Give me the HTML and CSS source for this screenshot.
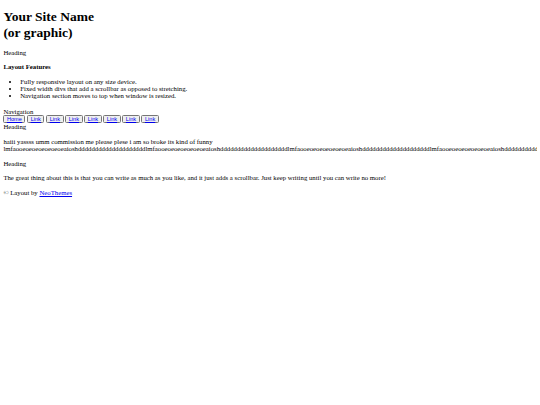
FILE: index.html
```html
<!DOCTYPE html>
<html>
<head>
<meta charset="utf-8">
<title>Your Site Name</title>
<link rel="stylesheet" href="styles.css">
</head>
<body>
<div class="page">
  <header class="site-header">
    <h1 class="site-title">Your Site Name<br>(or graphic)</h1>
  </header>
  <aside class="sidebar">
    <p class="block side-heading">Heading</p>
    <p class="block side-sub"><strong>Layout Features</strong></p>
    <ul class="features">
      <li>Fully responsive layout on any size device.</li>
      <li>Fixed width divs that add a scrollbar as opposed to stretching.</li>
      <li>Navigation section moves to top when window is resized.</li>
    </ul>
  </aside>
  <nav class="nav">
    <div class="nav-title">Navigation</div>
    <div class="nav-buttons">
      <button class="nav-btn"><a href="#">Home</a></button>
      <button class="nav-btn"><a href="#">Link</a></button>
      <button class="nav-btn"><a href="#">Link</a></button>
      <button class="nav-btn"><a href="#">Link</a></button>
      <button class="nav-btn"><a href="#">Link</a></button>
      <button class="nav-btn"><a href="#">Link</a></button>
      <button class="nav-btn"><a href="#">Link</a></button>
      <button class="nav-btn"><a href="#">Link</a></button>
    </div>
  </nav>
  <main class="content">
    <div class="content-heading">Heading</div>
    <p class="block intro">haiii yassss umm commission me please plese i am so broke its kind of funny lmfaooeoeoeoeoeoeoeaioshddddddddddddddddddddlmfaooeoeoeoeoeoeoeaioshddddddddddddddddddddlmfaooeoeoeoeoeoeoeaioshddddddddddddddddddddlmfaooeoeoeoeoeoeoeaioshddddddddddddddddddddlmfaooeoeoeoeoeoeoeaioshdddddddddddddddddddd</p>
    <p class="block">Heading</p>
    <p class="block">The great thing about this is that you can write as much as you like, and it just adds a scrollbar. Just keep writing until you can write no more!</p>
  </main>
  <footer class="site-footer">
    <p class="block footer-text">&copy; Layout by <a href="#">NeoThemes</a></p>
  </footer>
</div>
</body>
</html>
```

FILE: styles.css
```css
html {
  zoom: 0.421875;
  overflow: hidden;
}

body {
  margin: 8px;
  font-family: "Liberation Serif", "Times New Roman", serif;
  font-size: 16px;
  color: #000;
  background: #fff;
}

.site-title {
  font-size: 32px;
  font-weight: bold;
  margin: 14.4px 0 18.9px;
}

.block {
  margin: 16px 0;
}

.features {
  margin: 18px 0 21px;
  padding-left: 40px;
}

.nav-title {
  margin: 0;
}

.nav-buttons {
  margin: 0;
}

.content-heading {
  margin: 0 0 18.4px;
}

.content .block,
.site-footer .block {
  margin: 17.5px 0;
}

.site-footer .footer-text {
  margin-top: 19px;
}

.nav-btn {
  font-family: "Liberation Sans", Arial, sans-serif;
  font-size: 13.333px;
  padding: 1px 6px;
  margin: 0;
}

a {
  color: #0000ee;
}
```
